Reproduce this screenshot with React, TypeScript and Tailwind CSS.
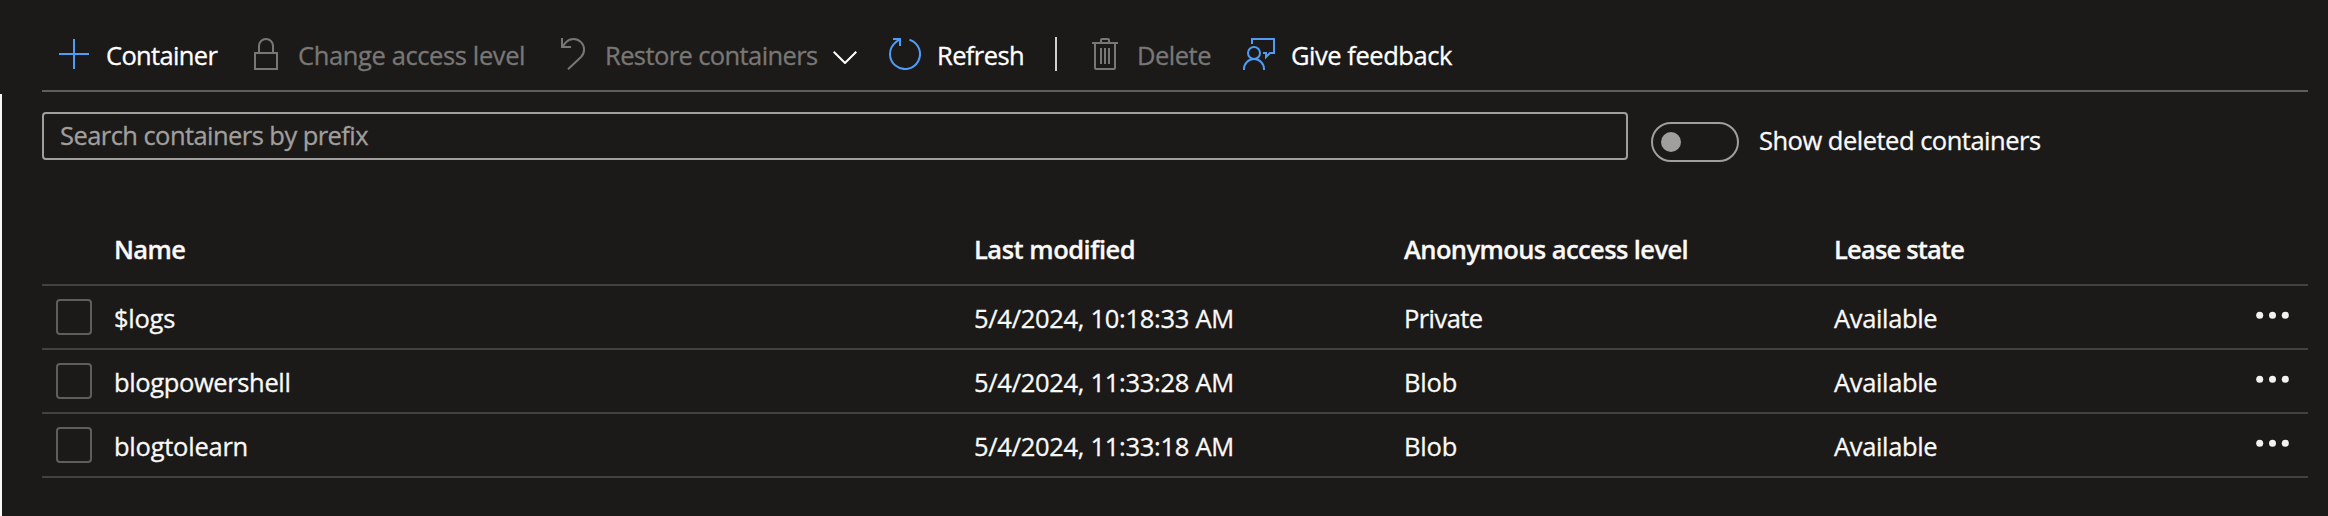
import type { ReactNode } from "react";

function Icon({ children, className }: { children: ReactNode; className: string }) {
  return (
    <svg
      viewBox="0 0 32 32"
      className={`h-8 w-8 shrink-0 ${className}`}
      fill="none"
      stroke="currentColor"
      strokeWidth="2"
      aria-hidden="true"
    >
      {children}
    </svg>
  );
}

function Command({
  icon,
  label,
  className,
  disabled = false,
}: {
  icon: ReactNode;
  label: string;
  className: string;
  disabled?: boolean;
}) {
  return (
    <button
      type="button"
      disabled={disabled}
      className={`flex shrink-0 items-start gap-4 text-left whitespace-nowrap ${disabled ? "text-[#797775]" : "text-white"} ${className}`}
    >
      <Icon className={disabled ? "text-[#797775]" : "text-[#4f9bf5]"}>{icon}</Icon>
      <span className="-mt-px">{label}</span>
    </button>
  );
}

const columns = [
  { label: "Name", tracking: "tracking-[-0.63px]" },
  { label: "Last modified", tracking: "tracking-[-0.49px]" },
  { label: "Anonymous access level", tracking: "tracking-[-0.59px]" },
  { label: "Lease state", tracking: "tracking-[-0.82px]" },
];

const rows = [
  { name: "$logs", nameTracking: "tracking-[-0.25px]", modified: "5/4/2024, 10:18:33 AM", access: "Private", accessTracking: "tracking-[-0.57px]" },
  { name: "blogpowershell", nameTracking: "tracking-[-0.37px]", modified: "5/4/2024, 11:33:28 AM", access: "Blob", accessTracking: "tracking-[-0.17px]" },
  { name: "blogtolearn", nameTracking: "tracking-[-0.24px]", modified: "5/4/2024, 11:33:18 AM", access: "Blob", accessTracking: "tracking-[-0.17px]" },
];

function Toolbar() {
  return (
    <div className="flex h-[92px] items-start border-b-2 border-[#605e5c] pt-[38px] pl-4">
      <Command className="w-48 tracking-[-0.65px]" label="Container" icon={<path d="M1 16H31M16 1V31" />} />
      <Command
        className="w-[307px] tracking-[-0.38px]"
        label="Change access level"
        disabled
        icon={<path d="M5 15H27V31H5ZM9 15V8A7 7 0 0 1 23 8V15" />}
      />
      <Command
        className="w-[276px] tracking-[-0.6px]"
        label="Restore containers"
        disabled
        icon={<path d="M5 0V9H14M5 9L9.1 4.1A10.5 10.5 0 0 1 24 19L11 31.3" />}
      />
      <svg viewBox="0 0 24 13" className="mt-[13px] mr-8 h-[13px] w-6 shrink-0" fill="none" stroke="white" strokeWidth="2">
        <path d="M0.7 0.7L12 12L23.3 0.7" />
      </svg>
      <Command
        className="w-[166px] tracking-[-0.6px]"
        label="Refresh"
        icon={<path d="M4 1H11V8M20.5 1.7A15 15 0 1 1 6.5 4.4L11 1" />}
      />
      <div className="-mt-px mr-8 h-[34px] w-0.5 shrink-0 bg-[#d2d0ce]" />
      <Command
        className="w-[154px] tracking-[-0.49px]"
        label="Delete"
        disabled
        icon={
          <path d="M3 5H29M12 4V2Q12 1 13 1H19Q20 1 20 2V4M6 5V30Q6 31 7 31H25Q26 31 26 30V5M12 10V26M16 10V26M20 10V26" />
        }
      />
      <Command
        className="tracking-[-0.46px]"
        label="Give feedback"
        icon={
          <>
            <path d="M9 6V1H31V15H27L23 19V15H20M1 32V31A10 10 0 0 1 21 31V32" />
            <circle cx="11" cy="15" r="6" />
          </>
        }
      />
    </div>
  );
}

export default function App() {
  return (
    <div className="flex h-[516px] w-[2328px] overflow-hidden bg-[#1b1a19] font-['Open_Sans',sans-serif] text-[25.5px] leading-9 text-[#faf9f8] [-webkit-text-stroke:0.3px]">
      <div className="mt-[94px] w-0.5 shrink-0 bg-[#faf9f8]" />
      <main className="ml-10 w-[2266px] shrink-0">
        <Toolbar />

        <div className="flex items-start pt-5">
          <input
            type="text"
            placeholder="Search containers by prefix"
            className="h-12 w-[1586px] rounded-[4px] border-2 border-[#a19f9d] bg-transparent px-4 pb-0.5 tracking-[-0.56px] outline-none placeholder:text-[#a19f9d] placeholder:opacity-100"
          />
          <button
            type="button"
            role="switch"
            aria-checked="false"
            aria-label="Show deleted containers"
            className="mt-2.5 ml-[23px] flex h-10 w-[88px] items-center rounded-full border-2 border-[#a19f9d] pl-2"
          >
            <span className="h-5 w-5 rounded-full bg-[#a19f9d]" />
          </button>
          <span className="mt-2.5 ml-5 tracking-[-0.5px] whitespace-nowrap">Show deleted containers</span>
        </div>

        <div className="mt-[52px]">
          <div className="grid h-[72px] grid-cols-[72px_860px_430px_430px_1fr] border-b-2 border-[#444240] pt-[17px] font-semibold">
            <span />
            {columns.map((column) => (
              <span key={column.label} className={column.tracking}>
                {column.label}
              </span>
            ))}
          </div>
          {rows.map((row) => (
            <div
              key={row.name}
              className="grid h-16 grid-cols-[72px_860px_430px_430px_1fr] items-start border-b-2 border-[#444240] pt-3.5"
            >
              <span className="-mt-px ml-3.5 h-9 w-9 rounded-[4px] border-2 border-[#605e5c]" />
              <span className={row.nameTracking}>{row.name}</span>
              <span className="tracking-[-0.29px]">{row.modified}</span>
              <span className={row.accessTracking}>{row.access}</span>
              <span className="flex justify-between tracking-[-0.35px]">
                Available
                <svg viewBox="0 0 33 8" className="mt-[11px] mr-[19px] h-2 w-[33px]" fill="#f3f2f1">
                  <circle cx="3.7" cy="4.2" r="3.5" />
                  <circle cx="16.5" cy="4.2" r="3.5" />
                  <circle cx="29.3" cy="4.2" r="3.5" />
                </svg>
              </span>
            </div>
          ))}
        </div>
      </main>
    </div>
  );
}
